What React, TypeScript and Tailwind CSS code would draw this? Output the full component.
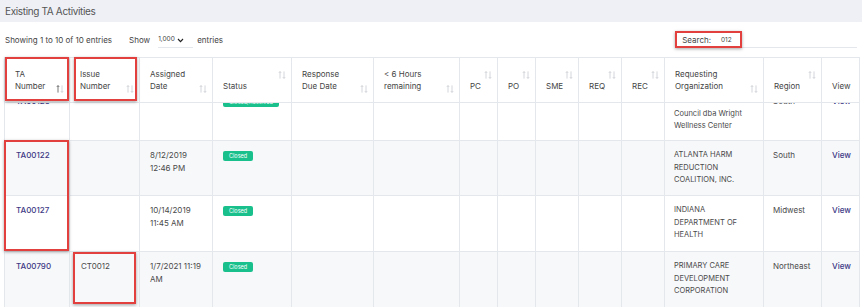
import React from 'react';

const cols =
  'grid grid-cols-[65px_70px_73px_79px_82px_86px_38px_38px_43px_43px_43px_99px_58px_38px]';

type Head = { lines: string[]; arrow: 'low' | 'high' | 'none'; active?: boolean };

const heads: Head[] = [
  { lines: ['TA', 'Number'], arrow: 'low', active: true },
  { lines: ['Issue', 'Number'], arrow: 'low' },
  { lines: ['Assigned', 'Date'], arrow: 'low' },
  { lines: ['Status'], arrow: 'high' },
  { lines: ['Response', 'Due Date'], arrow: 'low' },
  { lines: ['< 6 Hours', 'remaining'], arrow: 'low' },
  { lines: ['PC'], arrow: 'high' },
  { lines: ['PO'], arrow: 'high' },
  { lines: ['SME'], arrow: 'high' },
  { lines: ['REQ'], arrow: 'high' },
  { lines: ['REC'], arrow: 'high' },
  { lines: ['Requesting', 'Organization'], arrow: 'low' },
  { lines: ['Region'], arrow: 'high' },
  { lines: ['View'], arrow: 'none' },
];

type Row = {
  ta: string;
  issue: string;
  date: string[];
  status: string;
  org: string[];
  region: string;
  h: string;
};

const rows: Row[] = [
  {
    ta: 'TA00126',
    issue: '',
    date: [],
    status: 'Closed/Resolved',
    org: ['South Carolina HIV', 'Council dba Wright', 'Wellness Center'],
    region: 'South',
    h: 'h-[54px] bg-white',
  },
  {
    ta: 'TA00122',
    issue: '',
    date: ['8/12/2019', '12:46 PM'],
    status: 'Closed',
    org: ['ATLANTA HARM', 'REDUCTION', 'COALITION, INC.'],
    region: 'South',
    h: 'h-[55px] bg-[#f7f8fa]',
  },
  {
    ta: 'TA00127',
    issue: '',
    date: ['10/14/2019', '11:45 AM'],
    status: 'Closed',
    org: ['INDIANA', 'DEPARTMENT OF', 'HEALTH'],
    region: 'Midwest',
    h: 'h-[56px] bg-white',
  },
  {
    ta: 'TA00790',
    issue: 'CT0012',
    date: ['1/7/2021 11:19', 'AM'],
    status: 'Closed',
    org: ['PRIMARY CARE', 'DEVELOPMENT', 'CORPORATION'],
    region: 'Northeast',
    h: 'h-[56px] bg-[#f7f8fa]',
  },
];

const SortIcon = ({ active }: { active?: boolean }) => (
  <svg width="8" height="8" viewBox="0 0 8 8" fill="none" strokeWidth="0.8">
    <path d="M2 7.6V0.6M0.8 1.9L2 0.6L3.2 1.9" stroke={active ? '#555' : '#c9ccd2'} />
    <path d="M6 0.4V7.4M4.8 6.1L6 7.4L7.2 6.1" stroke="#c9ccd2" />
  </svg>
);

const Cell = ({ children, extra = '' }: { children?: React.ReactNode; extra?: string }) => (
  <div className={`border-r border-b border-[#e4e7ec] px-[10px] pt-[8px] ${extra}`}>{children}</div>
);

const Lines = ({ lines }: { lines: string[] }) => (
  <>
    {lines.map((l) => (
      <div key={l} className="whitespace-nowrap">{l}</div>
    ))}
  </>
);

const RedBox = ({ pos }: { pos: string }) => (
  <div
    className={`absolute border-2 border-[#e2403f] shadow-[0_1px_3px_rgba(0,0,0,0.35)] pointer-events-none ${pos}`}
  />
);

export default function App() {
  return (
    <div className="relative w-[862px] h-[307px] overflow-hidden bg-white font-['Inter',sans-serif] text-[#4a4a4a]">
      <div className="h-[22px] bg-[#eef0f5] pl-[5px] flex items-center text-[10px] tracking-[-0.35px] text-[#555]">
        Existing TA Activities
      </div>

      <div className="h-[35px] flex items-center pl-[5px] pr-[5px] text-[8px] text-[#444]">
        <span>Showing 1 to 10 of 10 entries</span>
        <span className="ml-[17px]">Show</span>
        <span className="ml-[8px] w-[35px] border-b border-[#e4e7ec] flex items-center pb-[2px] mt-[4px] text-[6.5px]">
          1,000
          <svg width="7" height="5" viewBox="0 0 7 5" className="ml-[2px]">
            <path d="M1 1L3.5 3.6L6 1" stroke="#222" strokeWidth="1.2" fill="none" />
          </svg>
        </span>
        <span className="ml-[4px]">entries</span>
        <div className="ml-auto flex items-center">
          <span>Search:</span>
          <span className="ml-[2px] w-[144px] border-b border-[#e4e7ec] pl-[8px] pb-[1px] mt-[5px] text-[6.5px]">
            012
          </span>
        </div>
      </div>

      <div className="ml-[4px] w-[856px] border-l border-t border-[#e4e7ec]">
        <div className={`${cols} h-[45px] bg-white`}>
          {heads.map((h, i) => (
            <div
              key={i}
              className="relative border-r border-b border-[#e4e7ec] px-[10px] pb-[10px] flex flex-col justify-end text-[8px] leading-[12px] text-[#444]"
            >
              <Lines lines={h.lines} />
              {h.arrow !== 'none' && (
                <span
                  className={`absolute right-[5px] ${h.arrow === 'low' ? 'top-[27px]' : 'top-[13px]'}`}
                >
                  <SortIcon active={h.active} />
                </span>
              )}
            </div>
          ))}
        </div>

        <div className="h-[204px] overflow-hidden">
          <div className="-mt-[16px]">
            {rows.map((r) => (
              <div key={r.ta} className={`${cols} ${r.h} text-[8px] leading-[12.5px] text-[#4a4a4a]`}>
                <Cell extra="pl-[11px] font-medium text-[#3e3a86]">{r.ta}</Cell>
                <Cell extra="pl-[11px]">{r.issue}</Cell>
                <Cell>
                  <Lines lines={r.date} />
                </Cell>
                <Cell>
                  <span className="inline-block mt-[2px] rounded-[2px] bg-[#19c08c] px-[6px] text-[5.5px] leading-[10px] text-white">
                    {r.status}
                  </span>
                </Cell>
                <Cell />
                <Cell />
                <Cell />
                <Cell />
                <Cell />
                <Cell />
                <Cell />
                <Cell extra="pl-[9px] text-[7.5px]">
                  <Lines lines={r.org} />
                </Cell>
                <Cell extra="pl-[9px]">{r.region}</Cell>
                <Cell extra="font-medium text-[#3e3a86]">View</Cell>
              </div>
            ))}
          </div>
        </div>
      </div>

      <RedBox pos="left-[5px] top-[57px] w-[64px] h-[44px]" />
      <RedBox pos="left-[74px] top-[57px] w-[63px] h-[44px]" />
      <RedBox pos="left-[4px] top-[140px] w-[65px] h-[111px]" />
      <RedBox pos="left-[73px] top-[252px] w-[63px] h-[52px]" />
      <RedBox pos="left-[675px] top-[31px] w-[67px] h-[17px]" />
    </div>
  );
}
